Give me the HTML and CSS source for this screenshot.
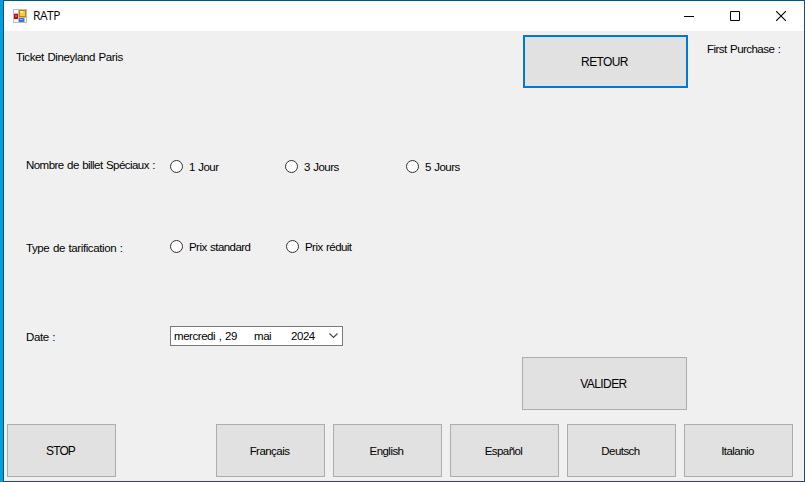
FILE: index.html
```html
<!DOCTYPE html>
<html lang="fr">
<head>
<meta charset="utf-8">
<title>RATP</title>
<link rel="stylesheet" href="styles.css">
</head>
<body>
<div class="window">
  <header class="titlebar">
    <svg class="app-icon" width="14" height="14" viewBox="0 0 14 14" shape-rendering="crispEdges">
      <path fill="#b9bcc0" d="M0 0h14v14H0z"/>
      <path fill="#fff" d="M1 1h4v3H1zM1 10h4v3H1zM12 9h1v4h-1z"/>
      <path fill="#b48712" d="M6 1h7v7H6z"/>
      <path fill="#ffc83d" d="M7 2h5v5H7z"/>
      <path fill="#ffe594" d="M7 2h3v2H7z"/>
      <path fill="#a91712" d="M1 5h4v5H1z"/>
      <path fill="#ee4b3f" d="M2 6h2v2H2z"/>
      <path fill="#3b73cd" d="M6 9h5v4H6z"/>
      <path fill="#83b1f7" d="M7 10h3v1H7z"/>
    </svg>
    <h1 class="title">RATP</h1>
    <div class="controls">
      <svg width="10" height="10" viewBox="0 0 10 10"><path d="M0 5.5h10" stroke="#000"/></svg>
      <svg width="10" height="10" viewBox="0 0 10 10"><path d="M.5.5h9v9h-9z" fill="none" stroke="#000"/></svg>
      <svg width="10" height="10" viewBox="0 0 10 10"><path d="M0 0l10 10M10 0L0 10" stroke="#000" stroke-width="1.1"/></svg>
    </div>
  </header>
  <main class="form">
    <section class="top">
      <h2 class="label heading">Ticket Dineyland Paris</h2>
      <button class="btn btn-wide btn-focus">RETOUR</button>
      <p class="label purchase">First Purchase :</p>
    </section>
    <section class="row tickets">
      <span class="label count-label">Nombre de billet Spéciaux :</span>
      <label class="option"><i class="radio"></i><span>1 Jour</span></label>
      <label class="option"><i class="radio"></i><span>3 Jours</span></label>
      <label class="option"><i class="radio"></i><span>5 Jours</span></label>
    </section>
    <section class="row pricing">
      <span class="label price-label">Type de tarification :</span>
      <label class="option"><i class="radio"></i><span>Prix standard</span></label>
      <label class="option reduced"><i class="radio"></i><span>Prix réduit</span></label>
    </section>
    <section class="row date">
      <span class="label">Date :</span>
      <div class="picker">
        <span class="day">mercredi , 29</span><span class="month">mai</span><span class="year">2024</span>
        <svg width="9" height="6" viewBox="0 0 9 6"><path d="M.5.5l4 4 4-4" fill="none" stroke="#444" stroke-width="1.1"/></svg>
      </div>
    </section>
    <section class="submit"><button class="btn btn-wide">VALIDER</button></section>
  </main>
  <footer class="actions">
    <button class="btn stop">STOP</button>
    <nav class="languages">
      <button class="btn">Français</button>
      <button class="btn">English</button>
      <button class="btn">Español</button>
      <button class="btn">Deutsch</button>
      <button class="btn">Italanio</button>
    </nav>
  </footer>
</div>
</body>
</html>
```
FILE: styles.css
```css
* { box-sizing: border-box; }
body {
  margin: 0;
  padding-left: 3px;
  height: 482px;
  overflow: hidden;
  background: #009fe3;
  color: #000;
  font: 11.5px/14px "Liberation Sans", Arial, sans-serif;
  letter-spacing: -0.55px;
  word-spacing: 0.8px;
}
h1, h2, p { margin: 0; font-size: inherit; font-weight: normal; }
.window {
  display: flex;
  flex-direction: column;
  width: 802px;
  height: 482px;
  border: 1px solid #174f70;
  background: #f0f0f0;
}
.titlebar {
  display: flex;
  align-items: center;
  height: 30px;
  flex: none;
  padding: 0 18px 0 9px;
  background: #fff;
}
.app-icon { margin-top: -1px; }
.title { margin-left: 6px; font: 12px/16px "Open Sans", sans-serif; letter-spacing: -0.45px; }
.controls { display: flex; gap: 36px; margin-left: auto; margin-top: -1px; }
.controls svg, .picker svg { display: block; }
.form { flex: 1; }
.label { white-space: nowrap; }
.top { display: flex; height: 57px; padding: 4px 0 0 12px; }
.heading { width: 507px; padding-top: 15px; letter-spacing: -0.4px; }
.purchase { margin-left: 19px; padding-top: 7px; }
.btn {
  width: 109px;
  height: 53px;
  flex: none;
  padding: 0 2px 0 0;
  border: 1px solid #adadad;
  border-radius: 0;
  background: #e1e1e1;
  color: inherit;
  font: inherit;
  letter-spacing: inherit;
}
.btn-wide { width: 165px; font-size: 12px; letter-spacing: -0.6px; }
.btn-focus { border: 2px solid #0078d7; }
.row {
  display: grid;
  grid-template-columns: 144px 115px 121px 1fr;
  height: 20px;
  padding-left: 22px;
  align-items: center;
}
.tickets { margin-top: 68px; }
.count-label { margin-top: -2px; }
.pricing { margin-top: 60px; }
.price-label { margin-top: 3px; letter-spacing: -0.4px; }
.date { margin-top: 70px; }
.date .label { margin-top: 2px; letter-spacing: -0.4px; }
.option { display: flex; align-items: center; gap: 6px; white-space: nowrap; }
.option span { padding-top: 1px; }
.reduced { margin-left: 1px; }
.radio { width: 13px; height: 13px; border: 1px solid #333; border-radius: 50%; background: #fff; }
.picker {
  display: flex;
  align-items: center;
  width: 173px;
  height: 20px;
  padding: 0 3px;
  border: 1px solid #7a7a7a;
  background: #fff;
  white-space: nowrap;
  letter-spacing: -0.45px;
}
.day { width: 80px; }
.month { width: 37px; }
.year { width: 38px; }
.submit { display: flex; margin: 11px 0 0 518px; }
.actions { display: flex; height: 57px; flex: none; padding: 0 11px 4px 3px; justify-content: space-between; }
.stop { font-size: 12px; letter-spacing: -0.9px; }
.languages { display: flex; gap: 8px; }
```
